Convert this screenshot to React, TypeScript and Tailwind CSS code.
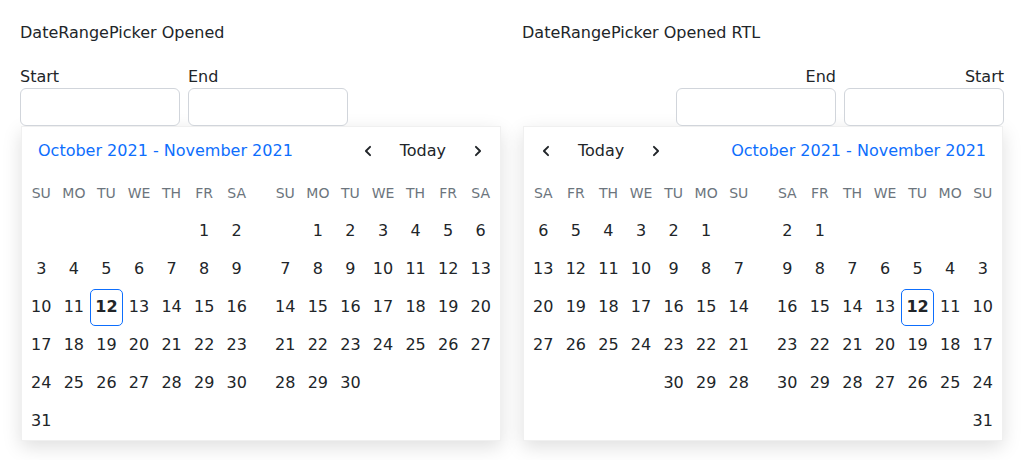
import React from 'react';

type Dir = 'ltr' | 'rtl';

const WEEKDAYS = ['SU', 'MO', 'TU', 'WE', 'TH', 'FR', 'SA'];

interface MonthSpec {
  year: number;
  month: number; // 0-based
}

const MONTHS: MonthSpec[] = [
  { year: 2021, month: 9 },
  { year: 2021, month: 10 },
];

const TODAY = { year: 2021, month: 9, day: 12 };

// Build the week rows of a month (null = empty cell)
const buildWeeks = ({ year, month }: MonthSpec): (number | null)[][] => {
  const offset = new Date(year, month, 1).getDay();
  const total = new Date(year, month + 1, 0).getDate();
  const cells: (number | null)[] = [];
  for (let i = 0; i < offset; i++) cells.push(null);
  for (let d = 1; d <= total; d++) cells.push(d);
  while (cells.length % 7 !== 0) cells.push(null);
  const weeks: (number | null)[][] = [];
  for (let i = 0; i < cells.length; i += 7) weeks.push(cells.slice(i, i + 7));
  return weeks;
};

const ChevronLeft = () => (
  <svg width="20" height="20" viewBox="0 0 24 24" fill="none" stroke="#212529" strokeWidth="2.3" strokeLinecap="round" strokeLinejoin="round">
    <path d="m14.5 17-5-5 5-5" />
  </svg>
);

const ChevronRight = () => (
  <svg width="20" height="20" viewBox="0 0 24 24" fill="none" stroke="#212529" strokeWidth="2.3" strokeLinecap="round" strokeLinejoin="round">
    <path d="m9.5 17 5-5-5-5" />
  </svg>
);

const Month: React.FC<{ spec: MonthSpec }> = ({ spec }) => {
  const weeks = buildWeeks(spec);
  return (
    <div className="w-[228px]">
      <div className="grid grid-cols-7 h-[38px] items-center">
        {WEEKDAYS.map((d) => (
          <div key={d} className="text-center text-[14px] text-[#6c757d]">
            {d}
          </div>
        ))}
      </div>
      {weeks.map((week, wi) => (
        <div key={wi} className="grid grid-cols-7 h-[38px]">
          {week.map((day, di) => {
            const isToday =
              day === TODAY.day && spec.month === TODAY.month && spec.year === TODAY.year;
            return (
              <div key={di} className="flex items-center justify-center">
                {day !== null && (
                  <span
                    dir="ltr"
                    className={
                      isToday
                        ? 'flex items-center justify-center w-[33px] h-[37px] rounded-[5px] border border-[#0d6efd] font-bold text-[#212529]'
                        : 'text-[#212529]'
                    }
                  >
                    {day}
                  </span>
                )}
              </div>
            );
          })}
        </div>
      ))}
    </div>
  );
};

const Popup: React.FC<{ dir: Dir }> = ({ dir }) => (
  <div className="mx-px w-[480px] bg-white border border-black/[0.06] shadow-[0_6px_18px_rgba(0,0,0,0.13)]">
    <div className="h-[47px] flex items-center justify-between ps-[16px] pe-[6px]">
      <span className="text-[#0d6efd]">October 2021 - November 2021</span>
      <div className="flex items-center">
        <button className="w-8 h-8 flex items-center justify-center">
          {dir === 'ltr' ? <ChevronLeft /> : <ChevronRight />}
        </button>
        <button className="px-4 h-8 text-[#212529]">Today</button>
        <button className="w-8 h-8 flex items-center justify-center">
          {dir === 'ltr' ? <ChevronRight /> : <ChevronLeft />}
        </button>
      </div>
    </div>
    <div className="flex gap-4 px-[3px]">
      {MONTHS.map((m) => (
        <Month key={m.month} spec={m} />
      ))}
    </div>
  </div>
);

const Field: React.FC<{ label: string }> = ({ label }) => (
  <div className="flex flex-col w-[160px]">
    <label className="h-[23px] leading-6 text-[#212529]">{label}</label>
    <input className="h-[38px] rounded-md border border-[#d1d5db] bg-white" />
  </div>
);

const PickerDemo: React.FC<{ title: string; dir: Dir }> = ({ title, dir }) => (
  <div>
    <div className="leading-6 text-[#212529]">{title}</div>
    <div dir={dir} className="mt-5">
      <div className="flex gap-2">
        <Field label="Start" />
        <Field label="End" />
      </div>
      <Popup dir={dir} />
    </div>
  </div>
);

export default function App() {
  return (
    <div
      className="w-[1024px] h-[460px] bg-white px-5 pt-[21px] grid grid-cols-2 gap-5 text-[16px] overflow-hidden"
      style={{ fontFamily: '"DejaVu Sans", sans-serif' }}
    >
      <PickerDemo title="DateRangePicker Opened" dir="ltr" />
      <PickerDemo title="DateRangePicker Opened RTL" dir="rtl" />
    </div>
  );
}
